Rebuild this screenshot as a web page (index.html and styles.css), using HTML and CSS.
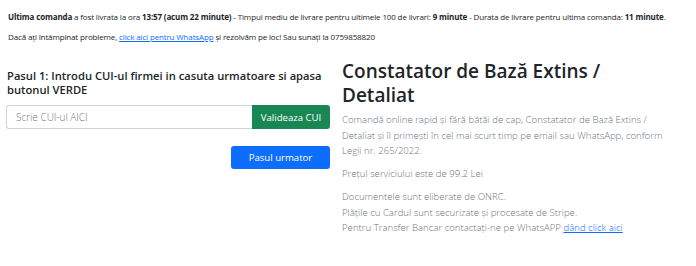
FILE: index.html
```html
<!DOCTYPE html>
<html lang="ro">
<head>
<meta charset="utf-8">
<link rel="stylesheet" href="styles.css">
</head>
<body>
<div class="info">
  <p class="info-line"><b>Ultima comanda</b> a fost livrata la ora <b>13:57 (acum 22 minute)</b> - Timpul mediu de livrare pentru ultimele 100 de livrari: <b>9 minute</b> - Durata de livrare pentru ultima comanda: <b>11 minute</b>.</p>
  <p class="info-line">Dacă ați întâmpinat probleme, <a href="#">click aici pentru WhatsApp</a> și rezolvăm pe loc! Sau sunați la 0759858820</p>
</div>
<div class="row">
  <div class="col col-left">
    <h5 class="step-title">Pasul 1: Introdu CUI-ul firmei in casuta urmatoare si apasa butonul VERDE</h5>
    <div class="input-group">
      <input class="cui-input" type="text" placeholder="Scrie CUI-ul AICI">
      <button class="btn btn-green">Valideaza CUI</button>
    </div>
    <div class="next-wrap">
      <button class="btn btn-blue">Pasul urmator</button>
    </div>
  </div>
  <div class="col col-right">
    <h2 class="prod-title">Constatator de Bază Extins / Detaliat</h2>
    <p class="muted">Comandă online rapid și fără bătăi de cap, Constatator de Bază Extins / Detaliat și îl primești în cel mai scurt timp pe email sau WhatsApp, conform Legii nr. 265/2022.</p>
    <p class="muted">Prețul serviciului este de 99.2 Lei</p>
    <p class="muted">Documentele sunt eliberate de ONRC.<br>Plățile cu Cardul sunt securizate și procesate de Stripe.<br>Pentru Transfer Bancar contactați-ne pe WhatsAPP <a href="#">dând click aici</a></p>
  </div>
</div>
</body>
</html>
```
FILE: styles.css
```css
* { box-sizing: border-box; }
html, body { margin: 0; padding: 0; background: #fff; }
body {
  font-family: "Open Sans", "Noto Sans", sans-serif;
  color: #212529;
}
.info { padding: 11px 8px 0 8px; }
.info-line {
  margin: 0 0 8px 0;
  font-size: 8px;
  line-height: 12px;
  letter-spacing: -0.14px;
  white-space: nowrap;
}
.info-line b { font-weight: 700; }
.info a { color: #0d6efd; text-decoration: underline; }
.row {
  display: flex;
  margin-top: 16px;
}
.col { padding: 0 6px; }
.col-left { flex: 0 0 336px; }
.col-right { flex: 0 0 342px; }
.step-title {
  font-size: 11.2px;
  font-weight: 600;
  line-height: 14px;
  margin: 10px 0 8px 1px;
}
.input-group { display: flex; height: 24px; }
.cui-input {
  flex: 1 1 auto;
  min-width: 0;
  border: 1px solid #ced4da;
  border-right: none;
  border-radius: 3px 0 0 3px;
  padding: 0 9px;
  font-family: inherit;
  font-size: 10px;
  font-weight: 300;
  color: #212529;
}
.cui-input::placeholder { color: #6c757d; }
.btn {
  border: none;
  color: #fff;
  font-family: inherit;
  font-size: 9.6px;
  border-radius: 3px;
  cursor: pointer;
}
.btn-green {
  background: #198754;
  border-radius: 0 3px 3px 0;
  width: 78px;
}
.next-wrap { display: flex; justify-content: flex-end; margin-top: 17px; }
.btn-blue {
  background: #0d6efd;
  width: 99px;
  height: 23px;
}
.prod-title {
  font-size: 19px;
  font-weight: 600;
  line-height: 24px;
  margin: 0 0 5px 0;
}
.muted {
  color: #6c757d;
  font-size: 9.6px;
  font-weight: 300;
  line-height: 15.5px;
  margin: 0 0 7.5px 0;
}
.muted a { color: #0d6efd; }
```
